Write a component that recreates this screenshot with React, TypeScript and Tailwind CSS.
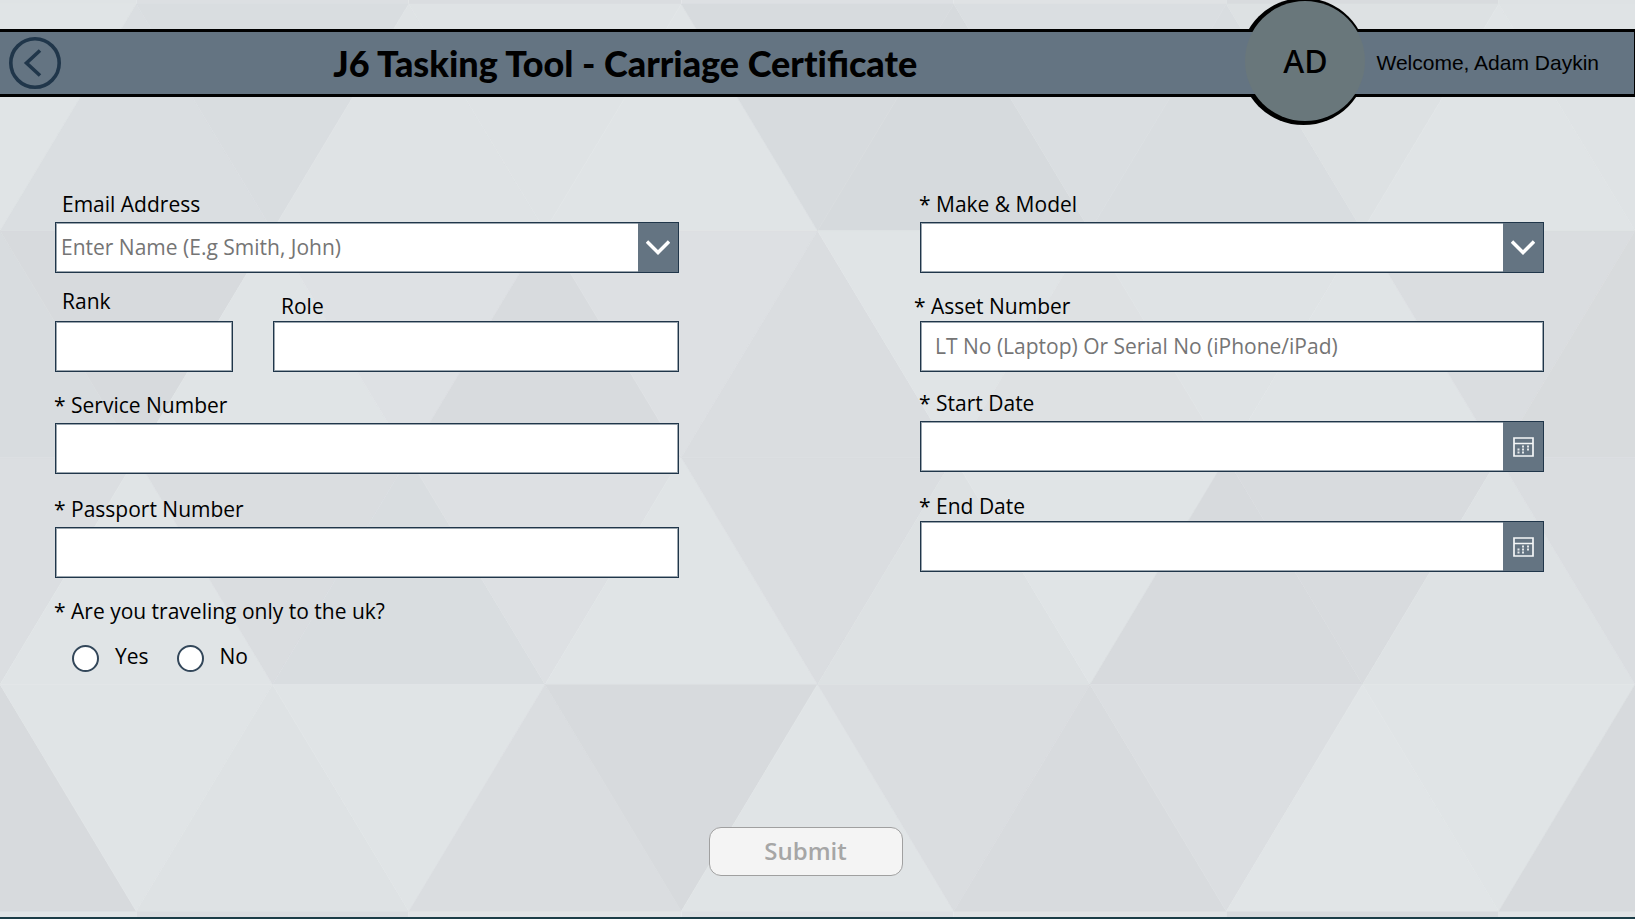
import React, { useState } from 'react';
import clsx from 'clsx';

// Background mosaic: rows of alternating up/down triangles, listed left to right.
const HALF = 136.25;
const ROW_HEIGHT = 226.8;
const FIRST_ROW = 4;

const MOSAIC_ROWS = [
  {
    startsUp: false,
    fills: ['#e0e4e6', '#dadee1', '#d9dde0', '#dfe3e5', '#dfe3e5', '#e0e4e6', '#d7dbde', '#d6dadd', '#dadee1', '#d9dde0', '#dde1e3', '#e0e4e6', '#dfe3e5'],
  },
  {
    startsUp: true,
    fills: ['#d8dcdf', '#d7dadd', '#e0e4e6', '#dee1e4', '#d8dbde', '#dde0e3', '#dadde0', '#e0e4e6', '#dee1e3', '#dfe3e5', '#e0e4e6', '#dadde0', '#d8dbdd'],
  },
  {
    startsUp: false,
    fills: ['#dbdee1', '#e0e4e6', '#dadde0', '#d9dde0', '#dde0e3', '#e0e4e6', '#dadde0', '#dde1e3', '#e0e4e6', '#d7dadd', '#d8dbde', '#dee2e4', '#dadde0'],
  },
  {
    startsUp: true,
    fills: ['#d7dadd', '#e0e4e6', '#dee2e4', '#e0e4e6', '#dadde0', '#d7dadd', '#e0e4e6', '#dadde0', '#d8dbde', '#dbdee1', '#e1e5e7', '#e0e4e6', '#d7dadd'],
  },
];

const TOP_STRIP = ['#dfe3e5', '#dcdfe2', '#dadde0', '#dde0e3', '#dfe2e4', '#d8dbde', '#dee2e4'];
const BOTTOM_STRIP = ['#e0e4e6', '#dadde0', '#e0e3e5', '#dde0e3', '#e0e3e5', '#d7dadd', '#e0e3e5'];

function Mosaic() {
  return (
    <svg className="absolute inset-0 -z-30 h-full w-full" viewBox="0 0 1635 919" preserveAspectRatio="none" aria-hidden="true">
      {TOP_STRIP.map((fill, i) => (
        <rect key={i} x={(i * 2 - 1) * HALF} y={0} width={HALF * 2} height={FIRST_ROW} fill={fill} />
      ))}
      {BOTTOM_STRIP.map((fill, i) => (
        <rect key={i} x={(i * 2 - 1) * HALF} y={911} width={HALF * 2} height={8} fill={fill} />
      ))}
      {MOSAIC_ROWS.map((row, r) =>
        row.fills.map((fill, i) => {
          const top = FIRST_ROW + r * ROW_HEIGHT;
          const bottom = top + ROW_HEIGHT;
          const up = row.startsUp ? i % 2 === 0 : i % 2 === 1;
          const apex = up ? top : bottom;
          const base = up ? bottom : top;
          const x = i * HALF;
          return (
            <polygon
              key={`${r}-${i}`}
              points={`${x},${apex} ${x - HALF},${base} ${x + HALF},${base}`}
              fill={fill}
              stroke={fill}
              strokeWidth={0.5}
            />
          );
        })
      )}
    </svg>
  );
}

function ChevronIcon() {
  return (
    <svg width="24" height="15" viewBox="0 0 24 15" fill="none" stroke="white" strokeWidth="3.4" aria-hidden="true">
      <path d="M1 1.5 12 12.5 23 1.5" />
    </svg>
  );
}

function CalendarIcon() {
  return (
    <svg width="21" height="20" viewBox="0 0 21 20" fill="none" aria-hidden="true">
      <path d="M1 1h19v18H1zM1 6.5h19" stroke="#f4f6f7" strokeWidth="1.7" />
      <path
        d="M9 8.5h2v2H9zM14 8.5h2v2h-2zM4.5 11.5h2v2h-2zM9 11.5h2v2H9zM14 11.5h2v2h-2zM4.5 14.5h2v2h-2zM9 14.5h2v2H9z"
        fill="#e3e7ea"
      />
    </svg>
  );
}

const boxClass = 'flex h-[51px] w-full border border-[#20364a] bg-white shadow-[inset_0_0_0_1px_#9aa5ae]';
const controlClass = 'h-full w-full min-w-0 flex-1 appearance-none bg-transparent pb-0.5 outline-none placeholder:text-[#757575]';
const sideClass = 'flex w-10 shrink-0 items-center justify-center bg-[#647482]';

type FieldProps = {
  id: string;
  label: string;
  required?: boolean;
  labelClass?: string;
  className?: string;
  children: React.ReactNode;
};

function Field({ id, label, required, labelClass = 'mb-1 -ml-px', className, children }: FieldProps) {
  return (
    <div className={className}>
      <label htmlFor={id} className={clsx('block', labelClass, !required && 'pl-2')}>
        {required && '* '}
        {label}
      </label>
      <div className={boxClass}>{children}</div>
    </div>
  );
}

function DateInput({ id }: { id: string }) {
  return (
    <>
      <input id={id} type="text" className={clsx(controlClass, 'px-4')} />
      <button type="button" aria-label="Open calendar" className={sideClass}>
        <CalendarIcon />
      </button>
    </>
  );
}

function Dropdown({ id, placeholder }: { id: string; placeholder?: string }) {
  return (
    <div className="flex w-full">
      <select id={id} defaultValue="" className={clsx(controlClass, 'pl-[5px] text-[#757575]')}>
        <option value="">{placeholder}</option>
      </select>
      <span className={clsx(sideClass, 'pointer-events-none')}>
        <ChevronIcon />
      </span>
    </div>
  );
}

export default function App() {
  const [ukOnly, setUkOnly] = useState('');

  return (
    <div className="relative isolate flex min-h-screen flex-col overflow-hidden font-['Open_Sans',sans-serif] text-[21px] leading-7 text-black">
      <Mosaic />

      {/* Header */}
      <header className="relative mt-[29px] flex h-[68px] items-center pr-9 pl-[9px]">
        <div className="absolute inset-0 -z-10 border-y-3 border-r border-black bg-[#647482]" />
        <button type="button" aria-label="Back" className="shrink-0">
          <svg width="52" height="52" viewBox="0 0 52 52" fill="none" stroke="#20364a" aria-hidden="true">
            <circle cx="26" cy="26" r="24.2" strokeWidth="3.6" />
            <path d="M31 13.5 17.5 26 31 38.5" strokeWidth="3.6" />
          </svg>
        </button>
        {/* "ti" is kept apart so that only the "fi" ligature forms */}
        <h1 className="flex-1 pr-14 text-center font-['Lato',sans-serif] text-4xl font-black">
          J6 Tasking Tool - Carriage <span className="[font-variant-ligatures:none]">Cert</span>ificate
        </h1>
        <div className="relative -mt-1 flex size-[120px] shrink-0 items-center justify-center rounded-full bg-[#69777b] font-['Noto_Sans',sans-serif] text-[32px] font-medium">
          <span className="absolute -top-[3px] -left-[5px] -z-20 size-[127px] rounded-full bg-black" />
          AD
        </div>
        <p className="ml-[11px] shrink-0 font-['Liberation_Sans',sans-serif] text-[21px]">Welcome, Adam Daykin</p>
      </header>

      <form className="flex flex-1 flex-col" onSubmit={(e) => e.preventDefault()}>
        <div className="grid grid-cols-2 gap-x-[241px] pt-[93px] pr-[91px] pl-[55px]">
          {/* Traveller */}
          <div>
            <Field id="email" label="Email Address">
              <Dropdown id="email" placeholder="Enter Name (E.g Smith, John)" />
            </Field>
            <div className="mt-3.5 flex items-end gap-10">
              <Field id="rank" label="Rank" labelClass="mb-1.5 -ml-px" className="w-[178px] shrink-0">
                <input id="rank" type="text" className={clsx(controlClass, 'px-4')} />
              </Field>
              <Field id="role" label="Role" labelClass="mb-px" className="flex-1">
                <input id="role" type="text" className={clsx(controlClass, 'px-4')} />
              </Field>
            </div>
            <Field id="service" label="Service Number" required className="mt-[19px]">
              <input id="service" type="text" className={clsx(controlClass, 'px-4')} />
            </Field>
            <Field id="passport" label="Passport Number" required className="mt-[21px]">
              <input id="passport" type="text" className={clsx(controlClass, 'px-4')} />
            </Field>
            <fieldset className="mt-[19px]">
              <legend className="-ml-px">* Are you traveling only to the uk?</legend>
              <div className="mt-[17px] flex gap-7 pl-[17px]">
                {['Yes', 'No'].map((option) => (
                  <label key={option} className="flex h-[30px] gap-4">
                    <input
                      type="radio"
                      name="uk"
                      value={option}
                      checked={ukOnly === option}
                      onChange={() => setUkOnly(option)}
                      className="size-[27px] appearance-none self-end rounded-full border-2 border-[#33475a] bg-white checked:bg-[#33475a]"
                    />
                    {option}
                  </label>
                ))}
              </div>
            </fieldset>
          </div>

          {/* Equipment */}
          <div>
            <Field id="model" label="Make & Model" required>
              <Dropdown id="model" />
            </Field>
            <Field id="asset" label="Asset Number" required labelClass="mb-px -ml-1.5" className="mt-[19px]">
              <input
                id="asset"
                type="text"
                placeholder="LT No (Laptop) Or Serial No (iPhone/iPad)"
                className={clsx(controlClass, 'px-3.5')}
              />
            </Field>
            <Field id="start" label="Start Date" required className="mt-[17px]">
              <DateInput id="start" />
            </Field>
            <Field id="end" label="End Date" required labelClass="mb-px -ml-px" className="mt-5">
              <DateInput id="end" />
            </Field>
          </div>
        </div>

        <div className="mt-auto flex justify-center pr-6 pb-[41px]">
          <button
            type="submit"
            disabled
            className="h-[49px] w-[194px] rounded-xl border border-[#a0a0a0] bg-[#f4f4f4] pb-0.5 text-2xl font-semibold text-[#a6a6a6]"
          >
            Submit
          </button>
        </div>
      </form>

      <div className="h-0.5 bg-[#1b3d47]" />
    </div>
  );
}
